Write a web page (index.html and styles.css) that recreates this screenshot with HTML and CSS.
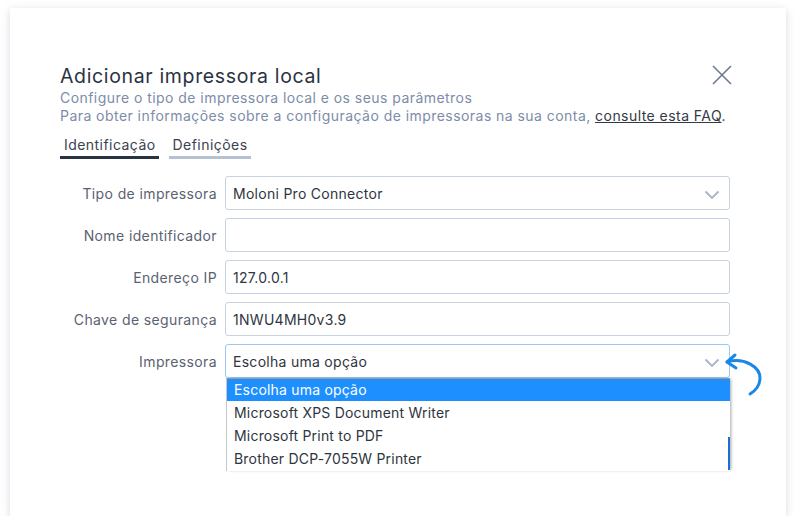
FILE: index.html
```html
<!DOCTYPE html>
<html lang="pt">
<head>
<meta charset="utf-8">
<link rel="stylesheet" href="styles.css">
</head>
<body>
<div class="card">
  <div class="header">
    <div class="titles">
      <h1 class="title">Adicionar impressora local</h1>
      <p class="sub">Configure o tipo de impressora local e os seus parâmetros</p>
      <p class="sub">Para obter informações sobre a configuração de impressoras na sua conta, <a class="faq">consulte esta FAQ</a><span class="dot">.</span></p>
    </div>
    <svg class="close" width="22" height="22" viewBox="0 0 22 22"><path d="M2 2 L20 20 M20 2 L2 20" stroke="#6b7a92" stroke-width="1.6" fill="none"/></svg>
  </div>
  <div class="tabs">
    <div class="tab active">Identificação</div>
    <div class="tab">Definições</div>
  </div>
  <div class="form">
    <label class="lbl">Tipo de impressora</label>
    <div class="field select">Moloni Pro Connector<svg class="chev" width="16" height="10" viewBox="0 0 16 10"><path d="M1.5 1.5 L8 8 L14.5 1.5" stroke="#a9b4c6" stroke-width="1.8" fill="none"/></svg></div>
    <label class="lbl">Nome identificador</label>
    <div class="field"></div>
    <label class="lbl">Endereço IP</label>
    <div class="field">127.0.0.1</div>
    <label class="lbl">Chave de segurança</label>
    <div class="field">1NWU4MH0v3.9</div>
    <label class="lbl">Impressora</label>
    <div class="field select focus">Escolha uma opção<svg class="chev" width="16" height="10" viewBox="0 0 16 10"><path d="M1.5 1.5 L8 8 L14.5 1.5" stroke="#a9b4c6" stroke-width="1.8" fill="none"/></svg>
      <div class="list">
        <div class="opt sel">Escolha uma opção</div>
        <div class="opt">Microsoft XPS Document Writer</div>
        <div class="opt">Microsoft Print to PDF</div>
        <div class="opt">Brother DCP-7055W Printer</div>
      </div>
      <div class="btnedge"></div>
    </div>
  </div>
  <svg class="arrow" width="50" height="50" viewBox="0 0 50 50">
    <path d="M3 11 C 20 6, 37 16, 36 28 C 35.5 35, 31 40, 26 43" stroke="#1a86e8" stroke-width="3" fill="none" stroke-linecap="round"/>
    <path d="M11 4 L3 11 L12 17" stroke="#1a86e8" stroke-width="3" fill="none" stroke-linecap="round" stroke-linejoin="round"/>
  </svg>
</div>
</body>
</html>
```
FILE: styles.css
```css
html, body { margin: 0; padding: 0; background: #ffffff; }
body { font-family: "Inter", "Noto Sans", sans-serif; }
.card {
  position: relative;
  margin: 8px 0 0 10px;
  width: 776px;
  height: 508px;
  background: #fff;
  box-shadow: 0 2px 8px rgba(140, 150, 175, 0.35);
  box-sizing: border-box;
  padding: 56px 0 0 50px;
}
.header { display: flex; align-items: flex-start; width: 672px; justify-content: space-between; }
.titles { min-width: 0; flex: 1; }
.title { margin: 0; font-size: 19.5px; font-weight: 400; color: #2a3242; line-height: 25px; letter-spacing: 0.65px; white-space: nowrap; }
.sub { margin: 0; font-size: 14px; color: #7d8ca8; line-height: 18px; letter-spacing: 0.45px; white-space: nowrap; }
.faq { color: #333a44; text-decoration: underline; }
.dot { color: #333a44; }
.close { margin-top: 0; margin-right: -1px; flex: none; }
.tabs { display: flex; gap: 10px; margin-top: 11px; }
.tab { font-size: 14px; color: #3a4250; padding: 0 3px 2px 4px; border-bottom: 3px solid #b6c2d4; line-height: 18px; letter-spacing: 0.45px; }
.tab.active { border-bottom-color: #2a3342; }
.form {
  display: grid;
  grid-template-columns: 157px 505px;
  grid-auto-rows: 34px;
  column-gap: 8px;
  row-gap: 8px;
  margin-top: 17px;
}
.lbl { font-size: 14px; color: #5a6272; text-align: right; align-self: center; letter-spacing: 0.38px; }
.field {
  position: relative;
  border: 1px solid #c8d2e0;
  border-radius: 3px;
  box-sizing: border-box;
  font-size: 14px;
  color: #2f3540;
  padding: 0 7px;
  display: flex;
  align-items: center;
  letter-spacing: 0.28px;
}
.field.focus { border-color: #9cc8f2; }
.chev { position: absolute; right: 9px; top: 13px; }
.list {
  position: absolute;
  left: 0;
  top: 33px;
  width: 504px;
  height: 93px;
  overflow: hidden;
  background: #fff;
  box-shadow: 2px 0 3px -1px rgba(0,0,0,0.35);
  border-top: 1px solid #9a9a9a;
  border-left: 1px solid #c8c8c8;
  z-index: 2;
  box-sizing: border-box;
  letter-spacing: 0.2px;
}
.opt { height: 23px; line-height: 23px; padding-left: 7px; font-size: 14px; color: #2f3540; }
.opt.sel { background: #1e8fff; color: #fff; height: 22px; line-height: 22px; }
.btnedge {
  position: absolute;
  right: -1px;
  top: 92px;
  width: 2px;
  height: 33px;
  background: #1a6fd0;
  z-index: 3;
}
.arrow { position: absolute; left: 714px; top: 343px; }
```
